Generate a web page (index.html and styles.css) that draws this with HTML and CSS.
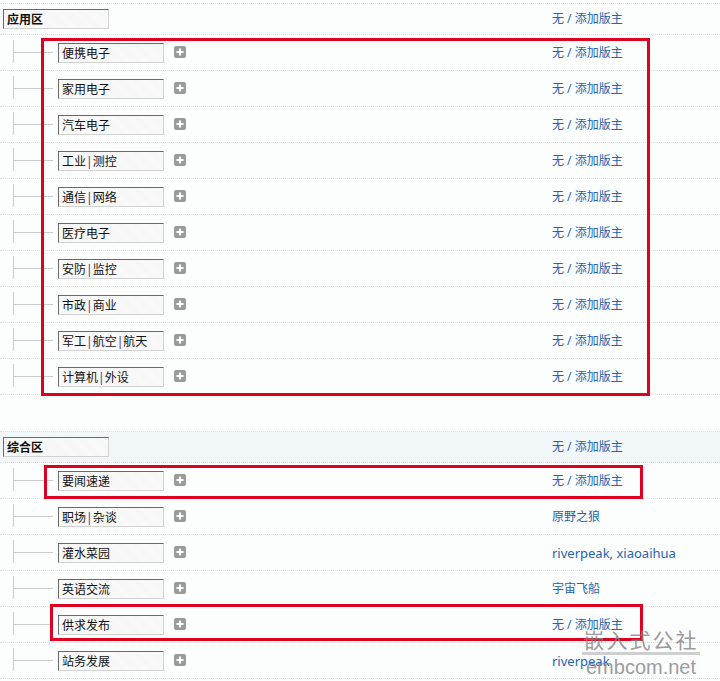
FILE: index.html
```html
<!DOCTYPE html>
<html lang="zh">
<head>
<meta charset="utf-8">
<title>版块管理</title>
<link rel="stylesheet" href="styles.css">
</head>
<body>
<div class="page">
  <div class="section">
    <div class="row head">
      <div class="left"><span class="box bold">应用区</span></div>
      <div class="right"><a class="mod">无 / 添加版主</a></div>
    </div>
    <div class="row">
      <div class="left"><span class="tree"></span><span class="box">便携电子</span><span class="add"><svg viewBox="0 0 12 12" width="12" height="12"><rect width="12" height="12" rx="2" fill="#9a9a9a"/><path d="M5 2.5h2v2.5h2.5v2H7v2.5H5V7H2.5V5H5z" fill="#fff"/></svg></span></div>
      <div class="right"><a class="mod">无 / 添加版主</a></div>
    </div>
    <div class="row">
      <div class="left"><span class="tree"></span><span class="box">家用电子</span><span class="add"><svg viewBox="0 0 12 12" width="12" height="12"><rect width="12" height="12" rx="2" fill="#9a9a9a"/><path d="M5 2.5h2v2.5h2.5v2H7v2.5H5V7H2.5V5H5z" fill="#fff"/></svg></span></div>
      <div class="right"><a class="mod">无 / 添加版主</a></div>
    </div>
    <div class="row">
      <div class="left"><span class="tree"></span><span class="box">汽车电子</span><span class="add"><svg viewBox="0 0 12 12" width="12" height="12"><rect width="12" height="12" rx="2" fill="#9a9a9a"/><path d="M5 2.5h2v2.5h2.5v2H7v2.5H5V7H2.5V5H5z" fill="#fff"/></svg></span></div>
      <div class="right"><a class="mod">无 / 添加版主</a></div>
    </div>
    <div class="row">
      <div class="left"><span class="tree"></span><span class="box">工业<span class="sep">|</span>测控</span><span class="add"><svg viewBox="0 0 12 12" width="12" height="12"><rect width="12" height="12" rx="2" fill="#9a9a9a"/><path d="M5 2.5h2v2.5h2.5v2H7v2.5H5V7H2.5V5H5z" fill="#fff"/></svg></span></div>
      <div class="right"><a class="mod">无 / 添加版主</a></div>
    </div>
    <div class="row">
      <div class="left"><span class="tree"></span><span class="box">通信<span class="sep">|</span>网络</span><span class="add"><svg viewBox="0 0 12 12" width="12" height="12"><rect width="12" height="12" rx="2" fill="#9a9a9a"/><path d="M5 2.5h2v2.5h2.5v2H7v2.5H5V7H2.5V5H5z" fill="#fff"/></svg></span></div>
      <div class="right"><a class="mod">无 / 添加版主</a></div>
    </div>
    <div class="row">
      <div class="left"><span class="tree"></span><span class="box">医疗电子</span><span class="add"><svg viewBox="0 0 12 12" width="12" height="12"><rect width="12" height="12" rx="2" fill="#9a9a9a"/><path d="M5 2.5h2v2.5h2.5v2H7v2.5H5V7H2.5V5H5z" fill="#fff"/></svg></span></div>
      <div class="right"><a class="mod">无 / 添加版主</a></div>
    </div>
    <div class="row">
      <div class="left"><span class="tree"></span><span class="box">安防<span class="sep">|</span>监控</span><span class="add"><svg viewBox="0 0 12 12" width="12" height="12"><rect width="12" height="12" rx="2" fill="#9a9a9a"/><path d="M5 2.5h2v2.5h2.5v2H7v2.5H5V7H2.5V5H5z" fill="#fff"/></svg></span></div>
      <div class="right"><a class="mod">无 / 添加版主</a></div>
    </div>
    <div class="row">
      <div class="left"><span class="tree"></span><span class="box">市政<span class="sep">|</span>商业</span><span class="add"><svg viewBox="0 0 12 12" width="12" height="12"><rect width="12" height="12" rx="2" fill="#9a9a9a"/><path d="M5 2.5h2v2.5h2.5v2H7v2.5H5V7H2.5V5H5z" fill="#fff"/></svg></span></div>
      <div class="right"><a class="mod">无 / 添加版主</a></div>
    </div>
    <div class="row">
      <div class="left"><span class="tree"></span><span class="box">军工<span class="sep">|</span>航空<span class="sep">|</span>航天</span><span class="add"><svg viewBox="0 0 12 12" width="12" height="12"><rect width="12" height="12" rx="2" fill="#9a9a9a"/><path d="M5 2.5h2v2.5h2.5v2H7v2.5H5V7H2.5V5H5z" fill="#fff"/></svg></span></div>
      <div class="right"><a class="mod">无 / 添加版主</a></div>
    </div>
    <div class="row">
      <div class="left"><span class="tree"></span><span class="box">计算机<span class="sep">|</span>外设</span><span class="add"><svg viewBox="0 0 12 12" width="12" height="12"><rect width="12" height="12" rx="2" fill="#9a9a9a"/><path d="M5 2.5h2v2.5h2.5v2H7v2.5H5V7H2.5V5H5z" fill="#fff"/></svg></span></div>
      <div class="right"><a class="mod">无 / 添加版主</a></div>
    </div>
  </div>

  <div class="section second">
    <div class="row head shaded">
      <div class="left"><span class="box bold">综合区</span></div>
      <div class="right"><a class="mod">无 / 添加版主</a></div>
    </div>
    <div class="row">
      <div class="left"><span class="tree"></span><span class="box">要闻速递</span><span class="add"><svg viewBox="0 0 12 12" width="12" height="12"><rect width="12" height="12" rx="2" fill="#9a9a9a"/><path d="M5 2.5h2v2.5h2.5v2H7v2.5H5V7H2.5V5H5z" fill="#fff"/></svg></span></div>
      <div class="right"><a class="mod">无 / 添加版主</a></div>
    </div>
    <div class="row">
      <div class="left"><span class="tree"></span><span class="box">职场<span class="sep">|</span>杂谈</span><span class="add"><svg viewBox="0 0 12 12" width="12" height="12"><rect width="12" height="12" rx="2" fill="#9a9a9a"/><path d="M5 2.5h2v2.5h2.5v2H7v2.5H5V7H2.5V5H5z" fill="#fff"/></svg></span></div>
      <div class="right"><a class="mod">原野之狼</a></div>
    </div>
    <div class="row">
      <div class="left"><span class="tree"></span><span class="box">灌水菜园</span><span class="add"><svg viewBox="0 0 12 12" width="12" height="12"><rect width="12" height="12" rx="2" fill="#9a9a9a"/><path d="M5 2.5h2v2.5h2.5v2H7v2.5H5V7H2.5V5H5z" fill="#fff"/></svg></span></div>
      <div class="right"><a class="mod latin">riverpeak, xiaoaihua</a></div>
    </div>
    <div class="row">
      <div class="left"><span class="tree"></span><span class="box">英语交流</span><span class="add"><svg viewBox="0 0 12 12" width="12" height="12"><rect width="12" height="12" rx="2" fill="#9a9a9a"/><path d="M5 2.5h2v2.5h2.5v2H7v2.5H5V7H2.5V5H5z" fill="#fff"/></svg></span></div>
      <div class="right"><a class="mod">宇宙飞船</a></div>
    </div>
    <div class="row">
      <div class="left"><span class="tree"></span><span class="box">供求发布</span><span class="add"><svg viewBox="0 0 12 12" width="12" height="12"><rect width="12" height="12" rx="2" fill="#9a9a9a"/><path d="M5 2.5h2v2.5h2.5v2H7v2.5H5V7H2.5V5H5z" fill="#fff"/></svg></span></div>
      <div class="right"><a class="mod">无 / 添加版主</a></div>
    </div>
    <div class="row">
      <div class="left"><span class="tree"></span><span class="box">站务发展</span><span class="add"><svg viewBox="0 0 12 12" width="12" height="12"><rect width="12" height="12" rx="2" fill="#9a9a9a"/><path d="M5 2.5h2v2.5h2.5v2H7v2.5H5V7H2.5V5H5z" fill="#fff"/></svg></span></div>
      <div class="right"><a class="mod latin">riverpeak</a></div>
    </div>
  </div>

  <div class="mark mark-1"></div>
  <div class="mark mark-2"></div>
  <div class="mark mark-3"></div>

  <div class="watermark">
    <div class="wm-cn">嵌入式公社</div>
    <div class="wm-en">embcom.net</div>
  </div>
</div>
</body>
</html>
```

FILE: styles.css
```css
html, body {
  margin: 0;
  padding: 0;
  background: #fcfdfd;
}

.page {
  position: relative;
  width: 720px;
  height: 681px;
  overflow: hidden;
  padding-top: 3px;
  box-sizing: border-box;
  font-family: "Noto Sans", "Noto Sans CJK SC", sans-serif;
  font-size: 12px;
  color: #222;
}

.section {
  border-bottom: 1px dotted #cfe3ee;
}

.section.second {
  margin-top: 36px;
}

.row {
  display: grid;
  grid-template-columns: 552px 1fr;
  height: 35px;
  border-top: 1px dotted #cfe3ee;
}

.row.head {
  height: 30px;
}

.row.shaded {
  background: #f1f6f8;
}

.left {
  display: flex;
  align-items: flex-start;
  padding-top: 8px;
}

.row.head .left {
  padding-top: 5px;
  padding-left: 3px;
}

.right {
  display: flex;
  align-items: center;
}

.mod {
  color: #2563ad;
  text-decoration: none;
  line-height: 14px;
  white-space: pre;
}

.mod.latin {
  font-size: 13px;
  margin-top: 1px;
}

.tree {
  width: 40px;
  height: 23px;
  margin-left: 13px;
  margin-right: 5px;
  margin-top: -3px;
  border-left: 1px solid #cccccc;
  box-sizing: border-box;
  background: linear-gradient(#cccccc, #cccccc) no-repeat 0 12px / 100% 1px;
}

.box {
  display: inline-block;
  width: 106px;
  height: 20px;
  box-sizing: border-box;
  border-style: solid;
  border-width: 1px;
  border-color: #6a6a6a #d2d2d2 #d2d2d2 #6a6a6a;
  background-color: #f6f6f6;
  background-image: repeating-linear-gradient(45deg, rgba(255,255,255,0.45) 0 1px, transparent 1px 2px);
  padding: 1px 3px 0;
  line-height: 18px;
  font-size: 12px;
  color: #111;
  white-space: nowrap;
  overflow: hidden;
}

.box.bold {
  font-weight: bold;
}

.sep {
  color: #5b2a78;
}

.add {
  display: inline-flex;
  margin-left: 10px;
  margin-top: 3px;
}

.mark {
  position: absolute;
  border: 3px solid #de001e;
  box-sizing: border-box;
  pointer-events: none;
}

.mark-1 {
  left: 41px;
  top: 38px;
  width: 609px;
  height: 358px;
}

.mark-2 {
  left: 44px;
  top: 465px;
  width: 599px;
  height: 34px;
}

.mark-3 {
  left: 50px;
  top: 604px;
  width: 593px;
  height: 37px;
}

.watermark {
  position: absolute;
  left: 582px;
  top: 626px;
  width: 118px;
  text-align: center;
  color: rgba(130, 130, 130, 0.8);
  pointer-events: none;
}

.wm-cn {
  font-family: "Noto Sans CJK SC", sans-serif;
  font-size: 21px;
  line-height: 26px;
  letter-spacing: 2px;
  border-bottom: 3px solid rgba(150, 150, 150, 0.45);
}

.wm-en {
  font-family: "Liberation Sans", sans-serif;
  font-size: 20px;
  line-height: 24px;
}
```
